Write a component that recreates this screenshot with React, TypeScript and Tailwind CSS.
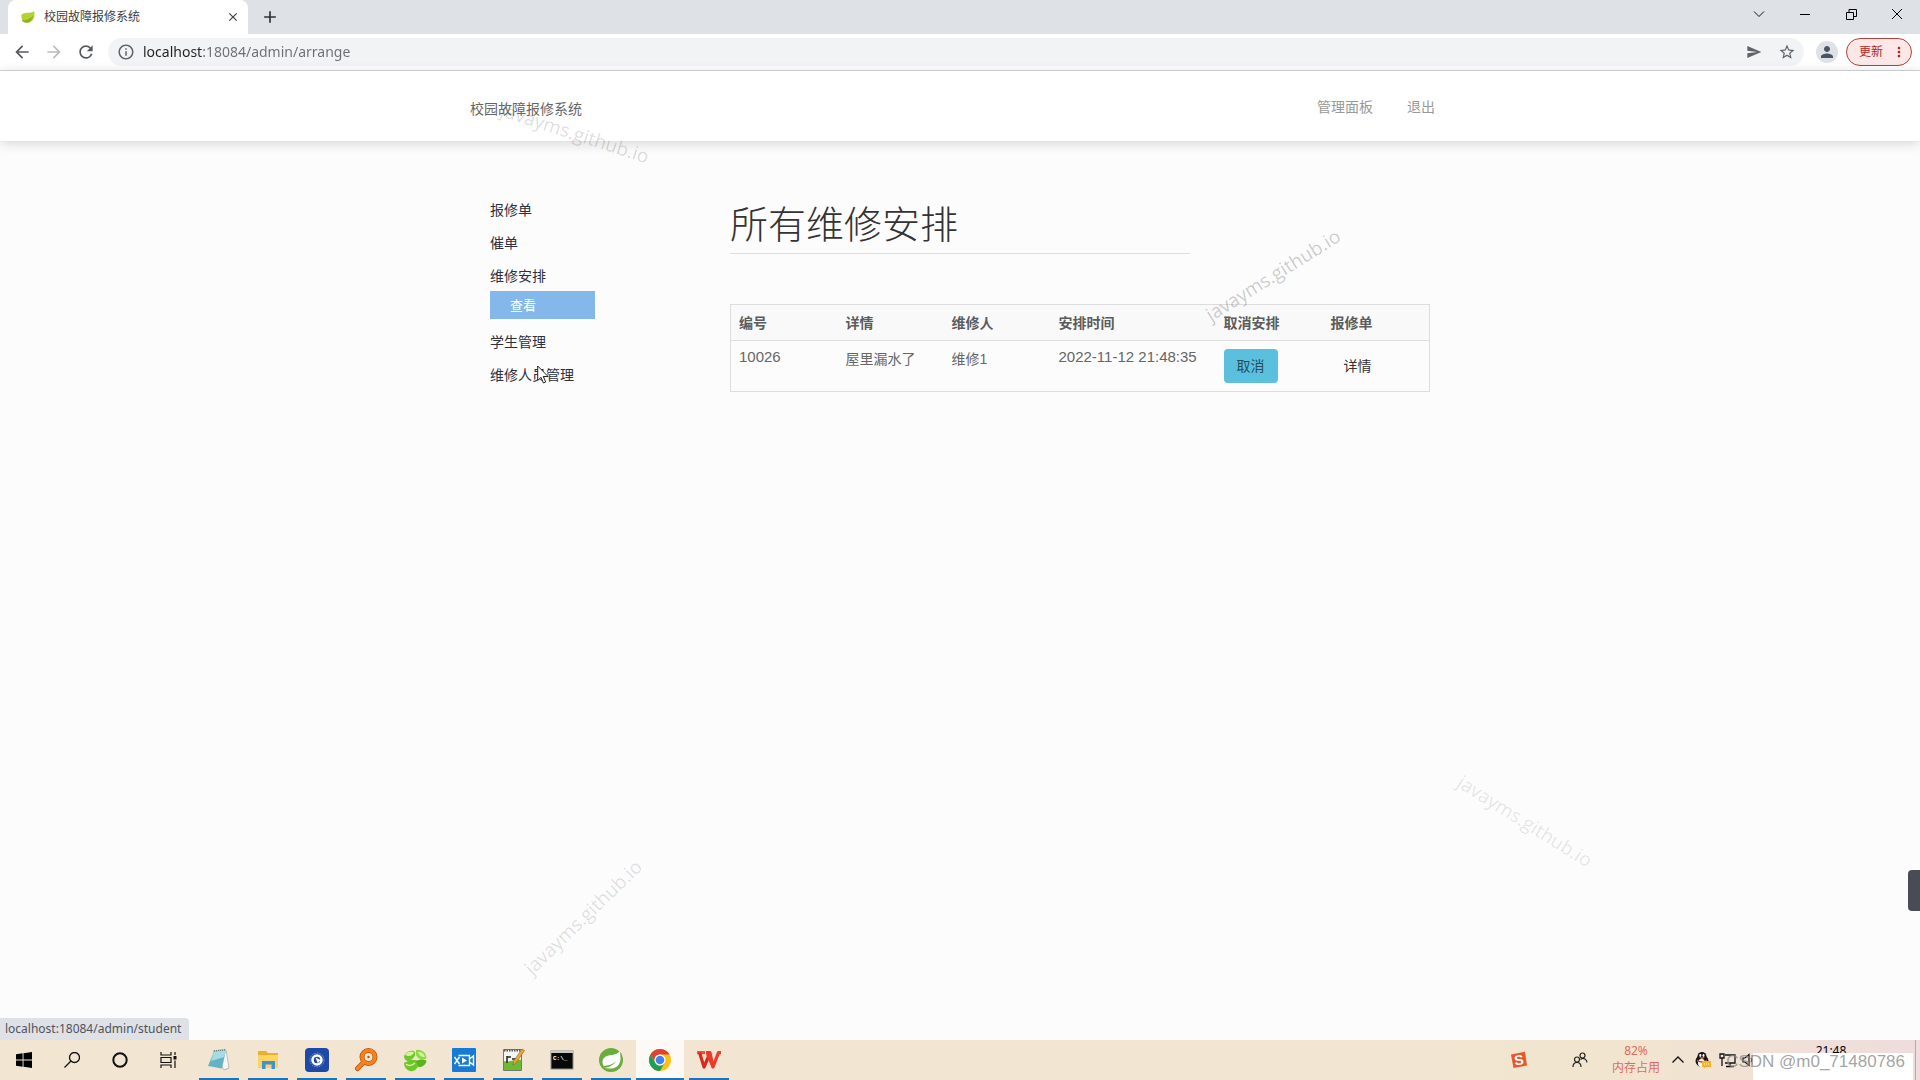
import { ReactNode } from "react";
import {
  MdArrowBack,
  MdArrowForward,
  MdRefresh,
  MdInfoOutline,
  MdSend,
  MdStarBorder,
  MdPerson,
  MdMoreVert,
  MdClose,
  MdAdd,
} from "react-icons/md";

interface Arrange {
  id: number;
  detail: string;
  worker: string;
  time: string;
}

interface TaskApp {
  name: string;
  icon: ReactNode;
  active?: boolean;
}

const arranges: Arrange[] = [
  { id: 10026, detail: "屋里漏水了", worker: "维修1", time: "2022-11-12 21:48:35" },
];

const LeafIcon = () => (
  <svg viewBox="0 0 16 16" className="size-4">
    <path d="M1.500 5.500C5 3 10 4.500 14.300 2.200c.8 4.300-.3 11-6.300 11.500C3.500 14 .8 11 1.500 5.500z" fill="#b3d334" />
    <path d="M1.500 11c3.500.8 8.500-.8 11.800-4.500-.8 4-3 7-6.300 7.200-2.500.1-4.500-.9-5.500-2.700z" fill="#8fb31d" />
  </svg>
);

const BrowserBar = () => (
  <header className="font-['Noto_Sans','Noto_Sans_CJK_SC',sans-serif]">
    <div className="flex h-[34px] bg-[#dee1e6] pl-2">
      <div className="flex w-60 items-center rounded-t-lg bg-white pr-2 pl-3">
        <LeafIcon />
        <span className="ml-2 flex-1 text-xs text-[#3c4043]">校园故障报修系统</span>
        <button aria-label="关闭标签页" className="text-[#3c4043]">
          <MdClose size={14} />
        </button>
      </div>
      <button aria-label="新标签页" className="ml-3 text-[#303236]">
        <MdAdd size={20} />
      </button>
      <div className="ml-auto flex">
        <button aria-label="搜索标签页" className="flex h-7 w-[46px] items-center justify-center">
          <svg viewBox="0 0 12 12" className="size-3" fill="none" stroke="#111">
            <path d="M1 3.500l5 5 5-5" />
          </svg>
        </button>
        <button aria-label="最小化" className="flex h-7 w-[46px] items-center justify-center">
          <svg viewBox="0 0 10 10" className="size-[10px]" stroke="#000">
            <path d="M0 5.500h10" />
          </svg>
        </button>
        <button aria-label="还原" className="flex h-7 w-[46px] items-center justify-center">
          <svg viewBox="0 0 11 11" className="size-[11px]" fill="none" stroke="#000">
            <path d="M.5 3.500h7v7h-7zM3 3.500v-3h7.500v7h-3" />
          </svg>
        </button>
        <button aria-label="关闭" className="flex h-7 w-[46px] items-center justify-center">
          <svg viewBox="0 0 10 10" className="size-[10px]" stroke="#000">
            <path d="M0 0l10 10M10 0L0 10" />
          </svg>
        </button>
      </div>
    </div>
    <div className="flex h-[37px] items-center border-b border-[#d5d7da] bg-white pr-2 pl-3">
      <button aria-label="后退" className="mr-3 text-[#55585c]">
        <MdArrowBack size={20} />
      </button>
      <button aria-label="前进" className="mr-3 text-[#babcbe]">
        <MdArrowForward size={20} />
      </button>
      <button aria-label="重新加载" className="mr-3 text-[#55585c]">
        <MdRefresh size={20} />
      </button>
      <div className="flex h-7 flex-1 items-center rounded-full bg-[#f1f3f4] px-2 text-[#5f6368]">
        <MdInfoOutline size={18} className="ml-px shrink-0" />
        <input
          aria-label="地址栏"
          readOnly
          value="localhost:18084/admin/arrange"
          className="ml-2 min-w-0 flex-1 bg-linear-to-r from-[#202124] from-[60px] to-[#6b6f74] to-[60px] bg-clip-text pb-px text-sm leading-6 text-transparent outline-none"
        />
        <button aria-label="共享" className="mr-4">
          <MdSend size={16} />
        </button>
        <button aria-label="收藏">
          <MdStarBorder size={18} />
        </button>
      </div>
      <button aria-label="用户" className="ml-3 flex size-[22px] items-center justify-center rounded-full bg-[#dee1e6] text-[#4b5463]">
        <MdPerson size={18} />
      </button>
      <button className="ml-2 flex h-7 w-[66px] items-center justify-between rounded-full border border-[#b5403a] bg-[#fce8e6] pr-1 pl-3 text-xs text-[#b3261e]">
        更新
        <MdMoreVert size={16} />
      </button>
    </div>
  </header>
);

const SiteHeader = () => (
  <div className="relative bg-white shadow-[0_2px_12px_rgba(0,0,0,0.16)]">
    <div className="mx-auto flex h-[70px] max-w-[980px] items-center justify-between pt-0.5 pr-[15px]">
      <a href="#" className="pt-1 text-[#666]">校园故障报修系统</a>
      <nav className="flex gap-[34px] text-[#999]">
        <a href="#">管理面板</a>
        <a href="#">退出</a>
      </nav>
    </div>
  </div>
);

const Cursor = () => (
  <svg viewBox="0 0 12 19" className="absolute top-[7px] left-[47px] h-[19px] w-3">
    <path d="M.7 1v14.500l3.300-3.200 2.400 5.700 2.300-1-2.400-5.500h4.800z" fill="#fff" stroke="#222" />
  </svg>
);

const Sidebar = () => (
  <nav className="w-[105px] shrink-0 text-[#2c313d]">
    <ul>
      <li className="h-[33px] leading-[35px]"><a href="#">报修单</a></li>
      <li className="h-[33px] leading-[35px]"><a href="#">催单</a></li>
      <li>
        <a href="#" className="block h-8 leading-[35px]">维修安排</a>
        <a href="#" className="mb-1.5 block h-7 bg-[#84b7ea] pl-5 text-[13px] leading-[30px] text-white">查看</a>
      </li>
      <li className="h-[33px] leading-[35px]"><a href="#">学生管理</a></li>
      <li className="relative h-[33px] leading-[35px]">
        <a href="#">维修人员管理</a>
        <Cursor />
      </li>
    </ul>
  </nav>
);

const ArrangeTable = () => (
  <table className="w-full table-fixed border-collapse border border-[#ddd] text-left text-[#666]">
    <colgroup>
      <col className="w-[107px]" />
      <col className="w-[106px]" />
      <col className="w-[107px]" />
      <col className="w-[165px]" />
      <col className="w-[107px]" />
      <col />
    </colgroup>
    <thead>
      <tr className="bg-[#f9f9f9]">
        {["编号", "详情", "维修人", "安排时间", "取消安排", "报修单"].map((title) => (
          <th key={title} className="px-2 pt-2 pb-[7px] font-bold text-[#5c5c5c]">{title}</th>
        ))}
      </tr>
    </thead>
    <tbody>
      {arranges.map((item) => (
        <tr key={item.id} className="border-t border-[#ddd] align-top">
          <td className="px-2 py-1.5 text-[15px] leading-5">{item.id}</td>
          <td className="p-2">{item.detail}</td>
          <td className="p-2">{item.worker}</td>
          <td className="px-2 py-1.5 text-[15px] leading-5 whitespace-nowrap">{item.time}</td>
          <td className="p-2">
            <button className="block h-[34px] rounded bg-[#5bc0de] px-[13px] text-[#264d59]">取消</button>
          </td>
          <td className="p-2">
            <a href="#" className="block px-[13px] leading-[34px] text-[#333]">详情</a>
          </td>
        </tr>
      ))}
    </tbody>
  </table>
);

const Watermark = ({ className }: { className: string }) => (
  <span
    className={`pointer-events-none absolute z-10 w-40 text-center font-['Open_Sans',sans-serif] text-[19px] leading-6 whitespace-nowrap ${className}`}
  >
    javayms.github.io
  </span>
);

const apps: TaskApp[] = [
  {
    name: "记事本",
    icon: (
      <svg viewBox="0 0 24 24" className="size-6">
        <path d="M18 2l4 18-4 2z" fill="#8d979b" />
        <path d="M6 3l13-1 3 18-5 2z" fill="#f4f6f6" stroke="#9aa5a8" strokeWidth=".6" />
        <path d="M7 3.500L19 2l-4 18.500L1 18z" fill="#63b3c4" />
        <path d="M7 3.500L19 2l-1.600 7L4 13z" fill="#a5dbe3" />
        <path d="M7 3l12-1.500" stroke="#66777c" strokeWidth="1.500" strokeDasharray="1 1" />
      </svg>
    ),
  },
  {
    name: "文件资源管理器",
    icon: (
      <svg viewBox="0 0 24 24" className="size-6">
        <path d="M2 3h8l2 2h10v15H2z" fill="#e8b02d" />
        <path d="M2 7h20v13H2z" fill="#fcd462" />
        <path d="M6 21v-8h13v8h-3.500v-4.500h-6V21z" fill="#3e93d3" />
      </svg>
    ),
  },
  {
    name: "浏览器",
    icon: (
      <svg viewBox="0 0 24 24" className="size-6">
        <rect width="24" height="24" rx="4" fill="#1e49a6" />
        <circle cx="12" cy="12" r="7" fill="none" stroke="#7e9bd4" strokeWidth="1" strokeDasharray="1.500 1" />
        <circle cx="12" cy="12" r="4.500" fill="none" stroke="#fff" strokeWidth="2.500" />
        <path d="M10.500 9.500l6.500 3.300-3 .6-1 2.400z" fill="#fff" />
      </svg>
    ),
  },
  {
    name: "搜索",
    icon: (
      <svg viewBox="0 0 24 24" className="size-6" fill="none" strokeLinecap="round">
        <path d="M10 14l-6.500 6.500" stroke="#b85308" strokeWidth="5" />
        <circle cx="14.500" cy="9" r="6.500" stroke="#b85308" strokeWidth="5" />
        <path d="M10 14l-6.500 6.500" stroke="#f58220" strokeWidth="3.500" />
        <circle cx="14.500" cy="9" r="6.500" stroke="#f58220" strokeWidth="3.500" />
        <circle cx="14.500" cy="9" r="1.200" fill="#b85308" />
      </svg>
    ),
  },
  {
    name: "Navicat",
    icon: (
      <svg viewBox="0 0 24 24" className="size-6">
        <path d="M1 8c3-6 9-6 11-4 1 4-2 7-5 8 4-1 8 0 9 3-1 6-5 9-9 8-4-1-6-5-6-8 2-1 3-2 5-2-3 0-5-2-5-5z" fill="#6cc62c" />
        <path d="M13 2c6-1 10 3 10.500 8-4 3-9 1-10.500-3z" fill="#8ada42" />
        <path d="M13 13c4-2 8-2 10.500 0-1 4-4 6-8 6z" fill="#55b51c" />
        <path d="M2 7c3-4 7-4 9-2.500C10 8 6 9 2 7zM15 4c4-.5 6 2 7 5-3 .5-6-1-7-5z" fill="#d3f595" />
        <path d="M3 16c2 2 6 2 9-1" fill="none" stroke="#d3f595" strokeWidth="1.500" />
      </svg>
    ),
  },
  {
    name: "录屏",
    icon: (
      <svg viewBox="0 0 24 24" className="size-6">
        <rect width="24" height="24" rx="1" fill="#167bd6" />
        <path d="M6.500 7.500h11v10h-11M17.500 11l4-3v9l-4-3M2.500 9l5 7M7.500 9l-5 7" fill="none" stroke="#fff" strokeWidth="1.400" />
        <path d="M10 9.500l5 3-5 3z" fill="#fff" />
      </svg>
    ),
  },
  {
    name: "文本编辑器",
    icon: (
      <svg viewBox="0 0 24 24" className="size-6">
        <path d="M2.500 1.500h18v21h-18z" fill="#f3f5ee" stroke="#737b6d" />
        <path d="M3 13c5 2 11-2 17-1v10H3z" fill="#70b833" />
        <path d="M3 2.500h17" stroke="#555" strokeDasharray="1.500 1" strokeWidth="2" />
        <path d="M6 8v7M6 9h4M11 11h5" stroke="#252525" strokeWidth="1.500" />
        <path d="M21 1l2.500 1.500L15 15l-3 2 .5-3.500z" fill="#f1a73a" stroke="#8a5a1c" strokeWidth=".6" />
      </svg>
    ),
  },
  {
    name: "命令提示符",
    icon: (
      <svg viewBox="0 0 24 24" className="size-6">
        <rect x="1" y="3" width="22" height="18" fill="#080808" stroke="#8d8d8d" />
        <path d="M1 4h22" stroke="#c8c8c8" strokeWidth="2" />
        <text x="3" y="12" fill="#fff" fontSize="6" fontWeight="700" fontFamily="Liberation Mono, monospace">C:\_</text>
      </svg>
    ),
  },
  {
    name: "Spring",
    icon: (
      <svg viewBox="0 0 24 24" className="size-6">
        <circle cx="12" cy="12" r="12" fill="#6aad3d" />
        <path d="M20.500 3c2 7 1.500 15-5.500 17-4 1.200-7.500.3-11-.2 5 0 10-1.800 13-6.500-4 4-7.500 4-12.500 4.800C1 10 7 7.500 13 7c3.500-.3 6-1.500 7.500-4z" fill="#fff" />
      </svg>
    ),
  },
  {
    name: "Chrome",
    active: true,
    icon: (
      <svg viewBox="0 0 24 24" className="size-6">
        <circle cx="12" cy="12" r="11" fill="#fbc116" />
        <path d="M2.470 6.500A11 11 0 0 1 21.530 6.500H12a5.500 5.500 0 0 0-4.760 8.250z" fill="#dc4437" />
        <path d="M2.470 6.500A11 11 0 0 0 12 23l4.760-8.250a5.500 5.500 0 0 1-9.520 0z" fill="#1e9f58" />
        <circle cx="12" cy="12" r="5.500" fill="#fff" />
        <circle cx="12" cy="12" r="4.300" fill="#4083ee" />
      </svg>
    ),
  },
  {
    name: "WPS",
    icon: (
      <svg viewBox="0 0 24 24" className="size-6" fill="none" strokeWidth="3.200" strokeLinejoin="round">
        <path d="M0 4.600h8" stroke="#f0533a" />
        <path d="M2.500 4.600L7 19l5-11.500" stroke="#d9281c" />
        <path d="M9 4.600h4l3 14.400 5.500-14.400H24" stroke="#ee3a28" />
        <path d="M10.500 6L16 19" stroke="#ee3a28" />
      </svg>
    ),
  },
];

const SystemTray = () => (
  <div className="flex items-center">
    <svg viewBox="0 0 18 18" className="size-[18px]">
      <path d="M1 3.500L15 .8 17 14.500 3.500 17z" fill="#e8572a" />
      <text x="9" y="14" textAnchor="middle" fill="#fff" fontSize="14" fontWeight="700" fontFamily="Liberation Sans, sans-serif" transform="rotate(-8 9 9)">S</text>
    </svg>
    <svg viewBox="0 0 16 16" className="ml-11 size-4" fill="none" stroke="#222" strokeWidth="1.200">
      <circle cx="5" cy="7.500" r="2.500" />
      <path d="M1 15c0-6 8-6 8 0" />
      <circle cx="10.500" cy="3.500" r="2.500" />
      <path d="M8.500 7.500c3-2.500 6.500 0 6.500 3" />
    </svg>
    <div className="ml-6 pb-0.5 text-center text-xs leading-[17px] text-[#e06a62]">
      <p>82%</p>
      <p>内存占用</p>
    </div>
    <svg viewBox="0 0 12 12" className="ml-3 size-3" fill="none" stroke="#111" strokeWidth="1.300">
      <path d="M.5 8.500L6 3l5.500 5.500" />
    </svg>
    <svg viewBox="0 0 17 17" className="ml-2.5 size-[17px]">
      <ellipse cx="8" cy="9" rx="6.500" ry="6" fill="#151515" />
      <circle cx="8" cy="4.500" r="4.500" fill="#151515" />
      <ellipse cx="7.500" cy="11" rx="3.500" ry="4" fill="#fff" />
      <ellipse cx="6.300" cy="3.500" rx="1" ry="1.400" fill="#fff" />
      <ellipse cx="9.500" cy="3.500" rx="1" ry="1.400" fill="#fff" />
      <path d="M5 5.500h6L8 7z" fill="#f9b233" />
      <path d="M3 7.500c3 2 7 2 10 0v2c-3 1.500-7 1.500-10 0z" fill="#e33" />
      <path d="M8 9h9v6h-5l-2 1.500V15H8z" fill="#f7b51d" />
      <path d="M10 12h5" stroke="#fff" strokeDasharray="1 1" />
    </svg>
    <svg viewBox="0 0 17 15" className="ml-2 h-[15px] w-[17px]" fill="none" stroke="#111" strokeWidth="1.300">
      <path d="M6 2h10v8H6M11 10v3.500M7 13.500h8M1 1h4v4H1zM3 5v8" />
    </svg>
    <svg viewBox="0 0 14 14" className="ml-1.5 size-3.5" fill="none" stroke="#111" strokeWidth="1.200">
      <path d="M1 5h2l4-3.500v11L3 9H1zM9 5q1.500 2 0 4M11 3q3 4 0 8" />
    </svg>
    <div className="ml-[51px] h-9 w-12 text-center text-xs leading-[18px] text-black">21:48</div>
    <svg viewBox="0 0 16 16" className="ml-6 size-4" stroke="#111">
      <path d="M0 2.500h16M0 8.500h16" />
    </svg>
    <div className="ml-5 h-10 w-[5px] border-l border-[#b9a9a6]" />
  </div>
);

const Taskbar = () => (
  <footer className="relative flex h-10 justify-between bg-linear-to-r from-[#f2e5d1] from-75% via-[#f2e5cf] via-85% to-[#efdcdd] font-['Noto_Sans','Noto_Sans_CJK_SC',sans-serif]">
    <div className="flex">
      <button aria-label="开始" className="flex w-12 items-center justify-center">
        <svg viewBox="0 0 16 16" className="size-4">
          <path d="M0 2.200L6.600 1.300v6.300H0zM7.500 1.200L16 0v7.600H7.500zM0 8.400h6.600v6.300L0 13.800zM7.500 8.400H16V16l-8.500-1.200z" />
        </svg>
      </button>
      <button aria-label="搜索" className="flex w-12 items-center justify-center">
        <svg viewBox="0 0 16 16" className="size-4" fill="none" stroke="#111" strokeWidth="1.300">
          <circle cx="10.500" cy="5.500" r="5" />
          <path d="M7 9L.5 15.500" />
        </svg>
      </button>
      <button aria-label="Cortana" className="flex w-12 items-center justify-center">
        <svg viewBox="0 0 16 16" className="size-4" fill="none" stroke="#111" strokeWidth="2">
          <circle cx="8" cy="8" r="6.700" />
        </svg>
      </button>
      <button aria-label="任务视图" className="mr-[3px] flex w-12 items-center justify-center">
        <svg viewBox="0 0 17 16" className="h-4 w-[17px]" fill="none" stroke="#111" strokeWidth="1.200">
          <path d="M1 0v3h10V0M1 5.500h10v5H1zM1 16v-3h10v3M15 0v3M15 8.500V16" />
          <path d="M15 4v3.500" strokeWidth="3" />
        </svg>
      </button>
      {apps.map((app) => (
        <button
          key={app.name}
          aria-label={app.name}
          className={`relative mr-px flex w-12 items-center justify-center ${app.active ? "bg-[#fdf9f5]" : ""}`}
        >
          {app.icon}
          <span className={`absolute bottom-0 h-0.5 bg-[#1a74bd] ${app.active ? "w-12" : "w-10"}`} />
        </button>
      ))}
    </div>
    <SystemTray />
    <div className="absolute right-[7px] bottom-0 h-[27px] w-40 bg-white" />
    <span className="absolute right-[15px] bottom-1.5 font-['Liberation_Sans',sans-serif] text-[17px] leading-6 whitespace-nowrap text-[#8c8c8c]/80">
      CSDN @m0_71480786
    </span>
  </footer>
);

const App = () => {
  return (
    <div className="relative flex min-h-screen flex-col overflow-hidden bg-[#fcfcfc] font-['Liberation_Sans','Noto_Sans_CJK_SC',sans-serif] text-sm">
      <BrowserBar />
      <SiteHeader />
      <main className="relative flex-1">
        <div className="mx-auto flex max-w-[940px] pt-[52px]">
          <Sidebar />
          <section className="ml-[135px] min-w-0 flex-1">
            <h1 className="w-[460px] border-b border-[#ddd] pt-1 text-[38px] leading-[56px] font-light text-[#333]">
              所有维修安排
            </h1>
            <div className="mt-[50px]">
              <ArrangeTable />
            </div>
          </section>
        </div>
        <div className="absolute bottom-0 left-0 rounded-tr bg-[#dee1e6] pr-2 pl-[5px] font-['Noto_Sans',sans-serif] text-xs leading-[22px] text-[#50545a]">
          localhost:18084/admin/student
        </div>
        <button aria-label="展开侧栏" className="absolute right-0 bottom-[129px] h-[41px] w-3 rounded-l bg-[#494c55]" />
      </main>
      <Taskbar />
      <Watermark className="top-[121px] left-[495px] rotate-[18deg] text-black/15" />
      <Watermark className="top-[263px] left-[1193px] -rotate-[32deg] text-black/20" />
      <Watermark className="top-[809px] left-[1445px] rotate-[32deg] text-black/10" />
      <Watermark className="top-[905px] left-[503px] -rotate-[44deg] text-black/12" />
    </div>
  );
};

export default App;
